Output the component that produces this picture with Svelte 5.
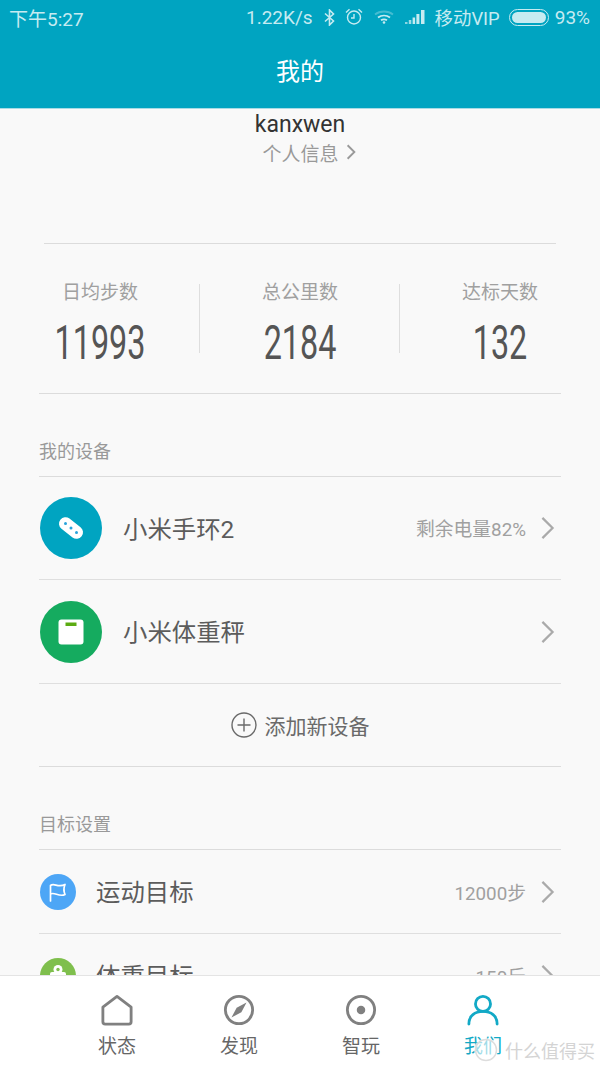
<script>
    const stats = [
        { label: '日均步数', value: '11993' },
        { label: '总公里数', value: '2184' },
        { label: '达标天数', value: '132' }
    ]
</script>

{#snippet chevron(cls)}
    <svg class={cls} viewBox="0 0 16 26" fill="none" stroke="currentColor" stroke-width="2.4">
        <path d="M2.5 2l11 11-11 11" />
    </svg>
{/snippet}

<div class="phone">
    <header class="header">
        <div class="status">
            <span>下午5:27</span>
            <div class="status__right">
                <span class="speed">1.22K/s</span>
                <svg class="ic-bt" viewBox="0 0 11 17" fill="none" stroke="currentColor" stroke-width="1.6">
                    <path d="M1 4.500l8.500 7.500-4 4V1l4 4L1 12.500" />
                </svg>
                <svg class="ic-alarm" viewBox="0 0 18 17" fill="none" stroke="currentColor" stroke-width="1.4">
                    <circle cx="9" cy="9.500" r="6.500" />
                    <path d="M9 6v4H6M1 4.500L4.500 1.300M17 4.500L13.500 1.300" />
                </svg>
                <svg class="ic-wifi" viewBox="0 0 20 14" fill="none" stroke="currentColor" stroke-width="1.800">
                    <path opacity=".35" d="M1 4.500C6 .5 14 .5 19 4.500" />
                    <path d="M4 7.500C7.500 5 12.500 5 16 7.500M7 10.300C8.800 9.200 11.200 9.200 13 10.300" />
                    <circle cx="10" cy="12.500" r="1.300" fill="currentColor" stroke="none" />
                </svg>
                <svg class="ic-signal" viewBox="0 0 20 14" fill="currentColor">
                    <rect x="0" y="12" width="2.500" height="2" opacity=".7" />
                    <rect x="3.800" y="10" width="2.500" height="4" opacity=".8" />
                    <rect x="7.600" y="7.500" width="2.500" height="6.500" />
                    <rect x="11.400" y="4" width="3" height="10" />
                    <rect x="16" y="0" width="3.500" height="14" />
                </svg>
                <span class="carrier">移动VIP</span>
                <span class="battery"><span class="battery__fill"></span></span>
                <span>93%</span>
            </div>
        </div>
        <h1 class="title">我的</h1>
    </header>

    <main class="content">
        <section class="profile">
            <div class="name">kanxwen</div>
            <div class="info">个人信息 {@render chevron('info__arrow')}</div>
        </section>

        <div class="rule rule--top"></div>

        <section class="stats">
            {#each stats as stat}
                <div class="stat">
                    <div class="stat__label">{stat.label}</div>
                    <div class="stat__value">{stat.value}</div>
                </div>
            {/each}
        </section>

        <div class="group">
            <div class="group__title">我的设备</div>
            <div class="row row--device">
                <span class="device-icon device-icon--band">
                    <svg viewBox="0 0 30 30">
                        <rect x="1.500" y="8.500" width="27" height="13" rx="6.500" fill="#fff" transform="rotate(38 15 15)" />
                        <circle cx="9.500" cy="10.500" r="1.500" fill="#29a3dc" />
                        <circle cx="15" cy="15" r="1.500" fill="#29a3dc" />
                        <circle cx="20.500" cy="19.500" r="1.500" fill="#29a3dc" />
                    </svg>
                </span>
                <span class="row__name">小米手环2</span>
                <span class="row__meta">剩余电量82%</span>
                {@render chevron('row__arrow')}
            </div>
            <div class="row row--device">
                <span class="device-icon device-icon--scale">
                    <svg viewBox="0 0 26 26">
                        <rect x="0.500" y="0.500" width="25" height="25" rx="3" fill="#fff" />
                        <rect x="7.500" y="3.500" width="11" height="3.500" fill="#5cab12" />
                    </svg>
                </span>
                <span class="row__name">小米体重秤</span>
                {@render chevron('row__arrow')}
            </div>
            <div class="add">
                <svg class="add__icon" viewBox="0 0 26 26" fill="none" stroke="currentColor" stroke-width="1.400">
                    <circle cx="13" cy="13" r="12" />
                    <path d="M13 6.500v13M6.500 13h13" />
                </svg>
                添加新设备
            </div>
        </div>

        <div class="group">
            <div class="group__title">目标设置</div>
            <div class="row row--goal">
                <svg class="goal-icon" viewBox="0 0 36 36">
                    <circle cx="18" cy="18" r="18" fill="#4da6f6" />
                    <path d="M10.500 27V11.500C14 8.500 18 14 25 10.500C23.500 14 23.500 17 25 20.500C19 23.500 14.500 17.500 10.500 20" fill="none" stroke="#fff" stroke-width="1.700" stroke-linejoin="round" stroke-linecap="round" />
                </svg>
                <span class="row__name">运动目标</span>
                <span class="row__meta">12000步</span>
                {@render chevron('row__arrow')}
            </div>
            <div class="row row--goal">
                <svg class="goal-icon" viewBox="0 0 36 36">
                    <circle cx="18" cy="18" r="18" fill="#7fbf4d" />
                    <circle cx="18" cy="11.500" r="4.500" fill="#fff" />
                    <circle cx="18" cy="11.500" r="1.700" fill="#7fbf4d" />
                    <rect x="10" y="14" width="16" height="14" rx="2" fill="#fff" />
                </svg>
                <span class="row__name">体重目标</span>
                <span class="row__meta">150斤</span>
                {@render chevron('row__arrow')}
            </div>
        </div>
    </main>

    <nav class="tabs">
        <div class="tab">
            <svg viewBox="0 0 34 34" fill="none" stroke="currentColor" stroke-width="3" stroke-linejoin="round">
                <path d="M17 2.500L32 14v15.500a2.500 2.500 0 0 1-2.500 2.500H4.500A2.500 2.500 0 0 1 2 29.500V14z" />
            </svg>
            <span>状态</span>
        </div>
        <div class="tab">
            <svg viewBox="0 0 34 34" fill="none" stroke="currentColor" stroke-width="3">
                <circle cx="17" cy="17" r="14.500" />
                <path d="M25 9L19.500 19.500 9 25l5.500-10.500z" fill="currentColor" stroke="none" />
            </svg>
            <span>发现</span>
        </div>
        <div class="tab">
            <svg viewBox="0 0 34 34" fill="none" stroke="currentColor" stroke-width="3">
                <circle cx="17" cy="17" r="14.500" />
                <circle cx="17" cy="17" r="4.500" fill="currentColor" stroke="none" />
            </svg>
            <span>智玩</span>
        </div>
        <div class="tab tab--active">
            <svg viewBox="0 0 34 34" fill="none" stroke="currentColor" stroke-width="3" stroke-linecap="round">
                <circle cx="17" cy="10.500" r="8" />
                <path d="M2 32C2 23 8.500 18.500 17 18.500S32 23 32 32" />
            </svg>
            <span>我们</span>
        </div>
    </nav>

    <div class="watermark">
        <svg class="watermark__logo" viewBox="0 0 24 24" fill="none" stroke="#ddd" stroke-width="1.500">
            <circle cx="12" cy="12" r="10.500" />
        </svg>
        <span>什么值得买</span>
    </div>
</div>

<style>
    :global(body) {
        margin: 0;
        background: #f9f9f9;
    }
    .phone {
        position: relative;
        display: flex;
        flex-direction: column;
        width: 600px;
        height: 1067px;
        overflow: hidden;
        font-family: Roboto, "Noto Sans CJK SC", sans-serif;
        background: #f9f9f9;
    }

    /* HEADER */
    .header {
        flex: none;
        height: 108px;
        background: #00a4c1;
        border-bottom: 1px solid #a8dbe5;
    }
    .status {
        display: flex;
        justify-content: space-between;
        align-items: center;
        height: 34px;
        padding: 0 10px 0 9px;
        font-size: 19px;
        color: #c6ebf1;
    }
    .status__right {
        display: flex;
        align-items: center;
    }
    .speed {
        margin-right: 11px;
    }
    .ic-bt {
        width: 11px;
        height: 17px;
        margin-right: 10px;
    }
    .ic-alarm {
        width: 18px;
        height: 17px;
        margin-right: 11px;
        margin-top: -2px;
    }
    .ic-wifi {
        width: 20px;
        height: 14px;
        margin-right: 11px;
    }
    .ic-signal {
        width: 20px;
        height: 14px;
        margin-right: 10px;
    }
    .carrier {
        margin-right: 9px;
        font-size: 18.400px;
    }
    .battery {
        display: block;
        box-sizing: border-box;
        width: 40px;
        height: 17px;
        margin-right: 6px;
        padding: 2px;
        border: 1px solid #c6ebf1;
        border-radius: 9px;
    }
    .battery__fill {
        display: block;
        width: 100%;
        height: 100%;
        border-radius: 6px;
        background: #c6ebf1;
    }
    .title {
        margin: 0;
        height: 74px;
        line-height: 76px;
        text-align: center;
        font-size: 24px;
        font-weight: 400;
        color: #fff;
    }

    /* CONTENT */
    .content {
        flex: 1;
        min-height: 0;
        overflow: hidden;
    }
    .profile {
        height: 134px;
        text-align: center;
    }
    .name {
        height: 30px;
        line-height: 31px;
        font-size: 23px;
        color: #333;
    }
    .info {
        display: flex;
        justify-content: center;
        align-items: center;
        gap: 7px;
        height: 26px;
        padding-left: 18px;
        font-size: 19px;
        color: #999;
    }
    :global(.info__arrow) {
        width: 10px;
        height: 16px;
        stroke-width: 3;
    }
    .rule {
        height: 1px;
        background: #dcdcdc;
    }
    .rule--top {
        margin: 0 44px;
    }
    .stats {
        display: grid;
        grid-template-columns: repeat(3, 1fr);
        height: 149px;
        padding-top: 40px;
        box-sizing: border-box;
    }
    .stat {
        position: relative;
        height: 69px;
        text-align: center;
    }
    .stat:not(:last-child)::after {
        content: '';
        position: absolute;
        top: 0;
        right: 0;
        width: 1px;
        height: 69px;
        background: #dedede;
    }
    .stat__label {
        margin-top: -3px;
        height: 24px;
        line-height: 24px;
        font-size: 19px;
        color: #a0a0a0;
    }
    .stat__value {
        margin-top: 15px;
        line-height: 46px;
        font-size: 49px;
        color: #555;
        transform: scaleX(0.66);
    }
    .group {
        margin: 0 39px;
        border-top: 1px solid #dcdcdc;
    }
    .group__title {
        height: 83px;
        line-height: 32px;
        padding-top: 42px;
        box-sizing: border-box;
        border-bottom: 1px solid #dcdcdc;
        font-size: 18px;
        color: #999;
    }
    .row {
        display: flex;
        align-items: center;
        box-sizing: border-box;
        padding-left: 1px;
        border-bottom: 1px solid #dfdfdf;
        color: #5c5c5c;
    }
    .row--device {
        height: 104px;
    }
    .group__title + .row--device {
        height: 103px;
    }
    .row--goal {
        height: 84px;
    }
    .row__name {
        flex: 1;
        font-size: 24.4px;
        margin-top: -2px;
    }
    .row--device .row__name {
        margin-left: 21px;
    }
    .row--goal .row__name {
        margin-left: 20px;
    }
    .row__meta {
        font-size: 18.800px;
        color: #a0a0a0;
        margin-right: 14px;
        margin-top: -1px;
    }
    :global(.row__arrow) {
        flex: none;
        width: 15px;
        height: 24px;
        margin-right: 6px;
        color: #aaa;
    }
    .device-icon {
        display: flex;
        align-items: center;
        justify-content: center;
        width: 62px;
        height: 62px;
        border-radius: 50%;
    }
    .device-icon--band {
        background: #00a4c1;
    }
    .device-icon--band svg {
        width: 30px;
        height: 30px;
    }
    .device-icon--scale {
        background: #15ab5f;
    }
    .device-icon--scale svg {
        width: 26px;
        height: 26px;
    }
    .goal-icon {
        flex: none;
        width: 36px;
        height: 36px;
    }
    .add {
        display: flex;
        align-items: center;
        justify-content: center;
        gap: 8px;
        height: 82px;
        font-size: 21px;
        color: #6a6a6a;
    }
    .add__icon {
        width: 26px;
        height: 26px;
    }

    /* TABS */
    .tabs {
        flex: none;
        display: grid;
        grid-template-columns: repeat(4, 122px);
        justify-content: center;
        box-sizing: border-box;
        height: 92px;
        padding-top: 18px;
        background: #fff;
        border-top: 1px solid #e4e4e4;
    }
    .tab {
        display: flex;
        flex-direction: column;
        align-items: center;
        font-size: 19px;
        color: #666;
    }
    .tab svg {
        width: 32px;
        height: 32px;
        color: #808080;
    }
    .tab span {
        margin-top: 9px;
        line-height: 24px;
    }
    .tab--active,
    .tab--active svg {
        color: #12a9c6;
    }

    .watermark {
        position: absolute;
        right: 5px;
        bottom: 4px;
        display: flex;
        align-items: center;
        gap: 7px;
        font-size: 18px;
        color: #d4d4d4;
    }
    .watermark__logo {
        width: 24px;
        height: 24px;
        background: rgba(255, 255, 255, 0.6);
        border-radius: 50%;
    }
</style>
